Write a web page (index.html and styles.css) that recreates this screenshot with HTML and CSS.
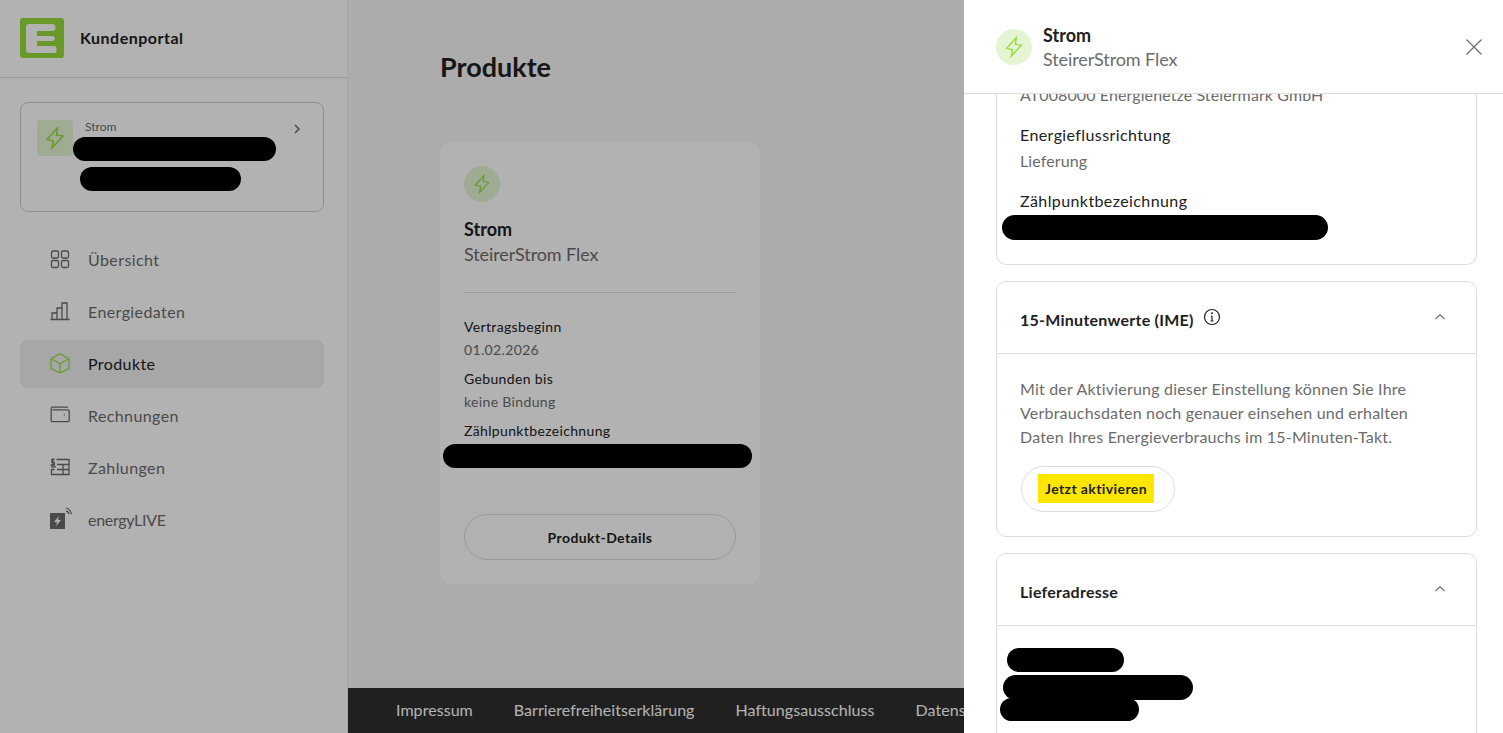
FILE: index.html
```html
<!DOCTYPE html>
<html lang="de">
<head>
  <meta charset="UTF-8">
  <meta name="viewport" content="width=device-width, initial-scale=1.0">
  <title>Kundenportal</title>
  <link rel="stylesheet" href="styles.css">
</head>
<body>
  <div class="page">
    <aside class="sidebar">
      <div class="brand">
        <svg class="logo" viewBox="0 0 44 40"><rect width="44" height="40" rx="3" fill="#96dc3c"/><path d="M9 6h23a3.500 3.500 0 0 1 0 7H17v5h15.500a2.500 2.500 0 0 1 0 5H17v5h17a2.500 2.500 0 0 1 2.500 2.500v2a2.500 2.500 0 0 1-2.500 2.500H9a3 3 0 0 1-3-3V9a3 3 0 0 1 3-3z" fill="#fff"/></svg>
        <span class="brand-name">Kundenportal</span>
      </div>
      <div class="account">
        <div class="account-icon"><svg class="bolt-lg" viewBox="0 0 24 24"><path d="M14.500 2 4 13.500l6.500 1.500L9 22l11-12-6.500-1z"/></svg></div>
        <span class="account-label">Strom</span>
        <svg class="account-arrow" viewBox="0 0 12 12"><path d="M4 2l4 4-4 4"/></svg>
      </div>
      <nav class="nav">
        <a class="nav-item">
          <svg viewBox="0 0 20 20"><rect x="1.500" y="2" width="7" height="7" rx="1.500"/><rect x="11.500" y="2" width="7" height="7" rx="1.500"/><rect x="1.500" y="11.500" width="7" height="7" rx="1.500"/><rect x="11.500" y="11.500" width="7" height="7" rx="1.500"/></svg>
          Übersicht
        </a>
        <a class="nav-item">
          <svg viewBox="0 0 20 20"><path d="M.5 18.500h19M2 18v-6h5v6M7 18V7h5v11M12 18V2h5v16"/></svg>
          Energiedaten
        </a>
        <a class="nav-item is-active">
          <svg class="icon-green" viewBox="0 0 20 20"><path d="M10 .8l9 5v9.600l-9 4.800-9-4.800V5.800zM1 5.800l9 4.900 9-4.900M10 10.700v9.500"/></svg>
          Produkte
        </a>
        <a class="nav-item">
          <svg viewBox="0 0 20 20"><path d="M18 2.200H3.200a1.400 1.400 0 0 0-2 1.300v12a1.200 1.200 0 0 0 1.200 1.200h15.600a1.200 1.200 0 0 0 1.200-1.200V6a1.200 1.200 0 0 0-1.200-1.200H2.500"/><path d="M13.800 10h1"/></svg>
          Rechnungen
        </a>
        <a class="nav-item">
          <svg viewBox="0 0 20 20"><path d="M6.500 2.500H19v15H1.500v-5h3M7 7.500h12M7 12.500h12M13 7.500v10M1 9.800h5"/><path d="M4.500 2.500H2v2.800h2.300v2.700H.5M2.800 1.200v8"/></svg>
          Zahlungen
        </a>
        <a class="nav-item nav-item-live">
          <svg class="icon-live" viewBox="0 0 22 24"><path class="live-box" d="M0 6h15v16H0z"/><path class="live-bolt" d="M9 9l-5 6h3l-1 4 5-6H8z"/><path class="live-wave" d="M16 4a4 4 0 0 1 3 3M16 1a8 8 0 0 1 5.500 6"/></svg>
          energyLIVE
        </a>
      </nav>
    </aside>

    <div class="main">
      <main class="content">
        <h1 class="title">Produkte</h1>
        <section class="product-card">
          <div class="round-icon"><svg class="bolt" viewBox="0 0 24 24"><path d="M14.500 2 4 13.500l6.500 1.500L9 22l11-12-6.500-1z"/></svg></div>
          <div class="product-type">Strom</div>
          <div class="product-name">SteirerStrom Flex</div>
          <hr class="divider">
          <dl class="facts">
            <dt>Vertragsbeginn</dt>
            <dd>01.02.2026</dd>
            <dt>Gebunden bis</dt>
            <dd>keine Bindung</dd>
            <dt>Zählpunktbezeichnung</dt>
          </dl>
          <button class="btn btn-wide">Produkt-Details</button>
        </section>
      </main>
      <footer class="footer">
        <a>Impressum</a>
        <a>Barrierefreiheitserklärung</a>
        <a>Haftungsausschluss</a>
        <a>Datenschutz</a>
      </footer>
    </div>
  </div>

  <div class="overlay"></div>

  <aside class="drawer">
    <header class="drawer-head">
      <div class="round-icon round-icon-light"><svg class="bolt-md" viewBox="0 0 24 24"><path d="M14.500 2 4 13.500l6.500 1.500L9 22l11-12-6.500-1z"/></svg></div>
      <div class="drawer-title">
        <div class="product-type">Strom</div>
        <div class="product-name">SteirerStrom Flex</div>
      </div>
      <svg class="close" viewBox="0 0 16 16"><path d="M.5.5l15 15M15.500.5l-15 15"/></svg>
    </header>
    <div class="drawer-body">
      <section class="panel panel-first">
        <div class="field-value">AT008000 Energienetze Steiermark GmbH</div>
        <div class="field-label">Energieflussrichtung</div>
        <div class="field-value">Lieferung</div>
        <div class="field-label">Zählpunktbezeichnung</div>
      </section>
      <section class="panel">
        <div class="panel-head">
          <h2>15-Minutenwerte (IME)</h2>
          <svg class="info" viewBox="0 0 18 18"><circle cx="9" cy="9" r="7.500"/><path d="M9 8v5M7.500 13h3M7.800 8H9"/><circle class="info-dot" cx="9" cy="5.300" r="1"/></svg>
          <svg class="chevron" viewBox="0 0 12 8"><path d="M1.500 6L6 1.800 10.500 6"/></svg>
        </div>
        <div class="panel-body">
          <p>Mit der Aktivierung dieser Einstellung können Sie Ihre Verbrauchsdaten noch genauer einsehen und erhalten Daten Ihres Energieverbrauchs im 15-Minuten-Takt.</p>
          <button class="btn btn-activate"><span class="marker">Jetzt aktivieren</span></button>
        </div>
      </section>
      <section class="panel">
        <div class="panel-head">
          <h2>Lieferadresse</h2>
          <svg class="chevron" viewBox="0 0 12 8"><path d="M1.500 6L6 1.800 10.500 6"/></svg>
        </div>
        <div class="panel-body panel-address"></div>
      </section>
    </div>
  </aside>

  <!-- geschwaerzte Stellen aus dem Screenshot -->
  <div class="blob blob-1"></div>
  <div class="blob blob-2"></div>
  <div class="blob blob-3"></div>
  <div class="blob blob-4"></div>
  <div class="blob blob-5"></div>
  <div class="blob blob-6"></div>
  <div class="blob blob-7"></div>
</body>
</html>
```

FILE: styles.css
```css
* { box-sizing: border-box; }
html, body { height: 100%; }
body { margin: 0; overflow: hidden; font-family: Lato, "Open Sans", sans-serif; font-size: 16px; color: #212121; background: #fff; }
svg { display: block; flex: none; fill: none; stroke: currentColor; }

.page { display: flex; height: 733px; }

.sidebar { width: 348px; flex: none; background: #fff; border-right: 1px solid #eee; }
.brand { display: flex; align-items: center; gap: 16px; height: 78px; padding: 0 20px 2px; border-bottom: 1px solid #ddd; }
.logo { width: 44px; height: 40px; stroke: none; }
.logo path { stroke: none; }
.brand-name { font-weight: 700; letter-spacing: .5px; }

.account { position: relative; display: flex; height: 110px; margin: 24px 23px 24px 20px; padding: 17px 16px; border: 1px solid #ccc; border-radius: 8px; }
.account-icon { display: flex; align-items: center; justify-content: center; width: 36px; height: 36px; border-radius: 4px; background: #e5f5d4; color: #96dc3c; }
.account-label { margin: -1px 0 0 12px; font-size: 12px; color: #6b6b6b; }
.account-arrow { position: absolute; top: 20px; right: 20px; width: 12px; height: 12px; color: #6b6b6b; stroke-width: 1.500; }
.bolt-lg { width: 24px; height: 24px; stroke-width: 1.500; }

.nav { display: flex; flex-direction: column; gap: 4px; margin: 0 23px 0 20px; }
.nav-item { display: flex; align-items: center; gap: 18px; height: 48px; padding: 0 0 2px 30px; border-radius: 8px; color: #6b6b6b; letter-spacing: .4px; }
.nav-item svg { width: 20px; height: 20px; stroke-width: 1.300; }
.nav-item.is-active { background: #f0f0f0; color: #212121; }
.nav-item-live { letter-spacing: -.3px; }
.icon-green { color: #96dc3c; }
.nav-item .icon-live { width: 22px; height: 24px; margin-right: -2px; stroke: none; }
.live-box { fill: #6b6b6b; stroke: none; }
.live-bolt { fill: #fff; stroke: none; }
.live-wave { stroke: #6b6b6b; }

.main { flex: 1; display: flex; flex-direction: column; min-width: 0; background: #f7f7f7; }
.content { flex: 1; padding: 0 0 0 92px; }
.title { margin: 0; padding-top: 49px; height: 142px; font-size: 27px; line-height: 36px; font-weight: 700; }

.product-card { width: 320px; height: 442px; padding: 24px; border-radius: 12px; background: #fff; }
.round-icon { display: flex; align-items: center; justify-content: center; width: 36px; height: 36px; border-radius: 50%; background: #e5f5d4; color: #96dc3c; }
.bolt { width: 20px; height: 20px; stroke-width: 1.500; }
.bolt-md { width: 22px; height: 22px; stroke-width: 1.500; }
.product-type { margin-top: 15px; font-size: 18px; line-height: 24px; font-weight: 700; }
.product-name { font-size: 18px; line-height: 26px; color: #6b6b6b; letter-spacing: -.1px; }
.divider { height: 1px; margin: 25px 0 0; border: 0; background: #ddd; }

.facts { margin: 24px 0 0; font-size: 14px; height: 121px; }
.facts dt { line-height: 20px; letter-spacing: .35px; }
.facts dd { margin: 3px 0 9px; line-height: 20px; color: #6b6b6b; letter-spacing: .35px; }

.btn { display: block; height: 46px; border: 1px solid #ddd; border-radius: 23px; background: #fff; font: 700 14px Lato, sans-serif; color: #212121; letter-spacing: .4px; }
.btn-wide { width: 272px; margin-top: 76px; }
.btn-activate { width: 154px; padding: 0 4px 2px 0; margin-left: 1px; }
.marker { display: inline-block; padding: 7px; line-height: 15px; background: #ffe600; }

.footer { display: flex; gap: 41px; height: 45px; padding: 0 0 2px 48px; align-items: center; white-space: nowrap; background: #2f2f2f; color: #fff; letter-spacing: .05px; }

.overlay { position: fixed; inset: 0; background: rgba(0, 0, 0, .3); }

.drawer { position: fixed; top: 0; right: 0; bottom: 0; width: 539px; display: flex; flex-direction: column; background: #fff; }
.drawer-head { position: relative; display: flex; align-items: center; gap: 11px; height: 94px; padding: 0 32px; border-bottom: 1px solid #ddd; flex: none; }
.drawer-head .product-type { margin: 0; }
.drawer-head .product-name { margin-top: -1px; }
.drawer-title { margin-top: 2px; }
.close { position: absolute; top: 39px; right: 21px; width: 16px; height: 16px; color: #6b6b6b; stroke-width: 1.200; }

.drawer-body { flex: 1; overflow: hidden; padding: 0 26px 0 32px; }
.panel { border: 1px solid #ddd; border-radius: 10px; margin-bottom: 16px; }
.panel-first { margin-top: -11px; height: 182px; padding: 0 23px; border-top: 0; border-radius: 0 0 10px 10px; }
.field-label { margin-top: 16px; line-height: 24px; letter-spacing: .4px; }
.field-value { margin-top: 2px; line-height: 24px; color: #6b6b6b; letter-spacing: .1px; }
.panel-first .field-value:first-child { margin-top: 0; }

.panel-head { display: flex; align-items: center; height: 72px; padding: 0 30px 0 23px; border-bottom: 1px solid #ddd; }
.panel-head h2 { margin: 3px 0 0; font-size: 16px; font-weight: 700; letter-spacing: .25px; }
.info { width: 18px; height: 18px; margin: -1px 0 0 9px; stroke-width: 1.200; }
.info-dot { fill: currentColor; stroke: none; }
.chevron { width: 12px; height: 8px; margin: -1px 0 0 auto; color: #6b6b6b; stroke-width: 1.200; }
.panel-body { padding: 23px 23px 24px; }
.panel-body p { margin: 0 0 17px; line-height: 24px; color: #6b6b6b; letter-spacing: .2px; }
.panel-address { height: 200px; }

.blob { position: fixed; background: #000; border-radius: 13px; }
.blob-1 { left: 73px; top: 137px; width: 203px; height: 24px; }
.blob-2 { left: 80px; top: 167px; width: 161px; height: 24px; }
.blob-3 { left: 443px; top: 444px; width: 309px; height: 24px; }
.blob-4 { left: 1002px; top: 215px; width: 326px; height: 25px; }
.blob-5 { left: 1007px; top: 648px; width: 117px; height: 24px; }
.blob-6 { left: 1003px; top: 675px; width: 190px; height: 25px; }
.blob-7 { left: 1000px; top: 698px; width: 139px; height: 23px; }
```
